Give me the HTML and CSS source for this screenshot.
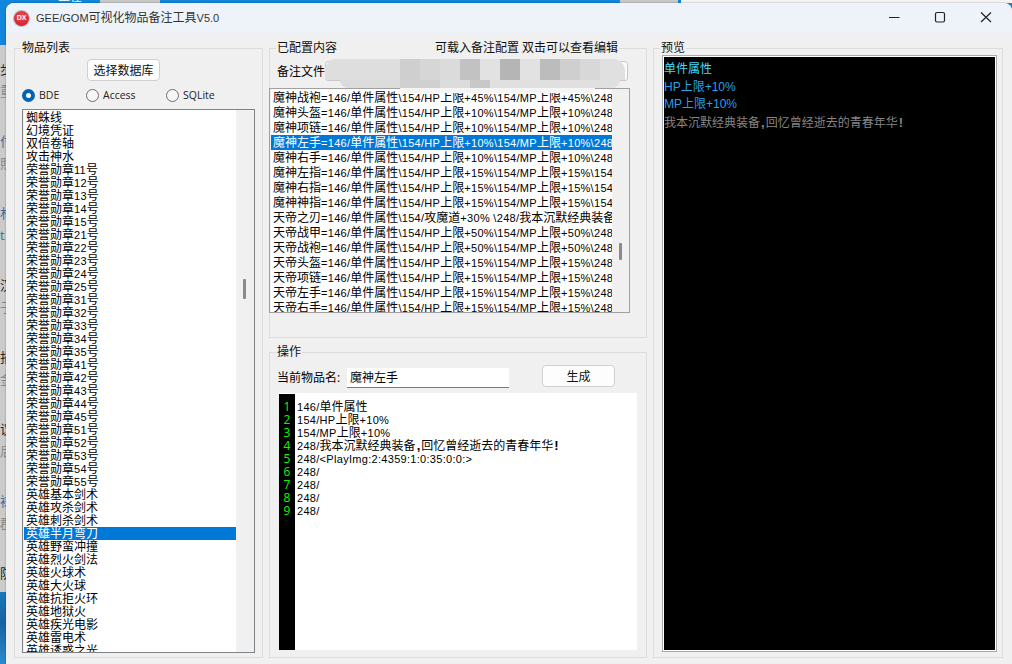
FILE: index.html
```html
<!DOCTYPE html>
<html lang="zh">
<head>
<meta charset="utf-8">
<title>GEE/GOM可视化物品备注工具V5.0</title>
<link rel="stylesheet" href="styles.css">
</head>
<body>
<div class="topband"><span class="topband-text">正在</span></div>
<div class="desk">
  <aside class="strip">
    <div class="app"><span class="d">步</span><span class="g">重</span></div>
    <div class="app"><span class="d b">付</span><span class="g">照</span></div>
    <div class="app"><span class="d b">林</span><span class="g b">t</span></div>
    <div class="app"><span class="d">汉</span><span class="g">子</span></div>
    <div class="app"><span class="d">捐</span><span class="g">金</span></div>
    <div class="app"><span class="d">议</span><span class="g">后</span></div>
    <div class="app"><span class="d b">袜</span><span class="g">郡</span></div>
    <div class="app"><span class="d">防</span></div>
  </aside>
  <main class="window">
    <header class="titlebar">
      <span class="logo"><span class="logo-t">DX</span></span>
      <span class="title"><i>GEE/GOM</i>可视化物品备注工具<i>V5.0</i></span>
      <div class="controls">
        <svg class="ctl" width="46" height="30" viewBox="0 0 46 30"><path d="M18 14.5h10.5" stroke="#222" stroke-width="1.2" fill="none"/></svg>
        <svg class="ctl" width="46" height="30" viewBox="0 0 46 30"><rect x="18.5" y="9.5" width="9" height="9.5" rx="1.5" stroke="#222" stroke-width="1.2" fill="none"/></svg>
        <svg class="ctl" width="46" height="30" viewBox="0 0 46 30"><path d="M18 9.5l10 9.5M28 9.5l-10 9.5" stroke="#222" stroke-width="1.2" fill="none"/></svg>
      </div>
    </header>
    <div class="panels">
      <fieldset class="group g-items">
        <legend class="lg">物品列表</legend>
        <button class="btn btn-db">选择数据库</button>
        <div class="radios">
          <label class="radio r1"><span class="dot on"></span>BDE</label>
          <label class="radio r2"><span class="dot"></span>Access</label>
          <label class="radio"><span class="dot"></span>SQLite</label>
        </div>
        <div class="listbox items">
          <ul class="rows">
            <li>蜘蛛线</li><li>幻境凭证</li><li>双倍卷轴</li><li>攻击神水</li>
            <li>荣誉勋章<i>11</i>号</li><li>荣誉勋章<i>12</i>号</li><li>荣誉勋章<i>13</i>号</li><li>荣誉勋章<i>14</i>号</li><li>荣誉勋章<i>15</i>号</li>
            <li>荣誉勋章<i>21</i>号</li><li>荣誉勋章<i>22</i>号</li><li>荣誉勋章<i>23</i>号</li><li>荣誉勋章<i>24</i>号</li><li>荣誉勋章<i>25</i>号</li>
            <li>荣誉勋章<i>31</i>号</li><li>荣誉勋章<i>32</i>号</li><li>荣誉勋章<i>33</i>号</li><li>荣誉勋章<i>34</i>号</li><li>荣誉勋章<i>35</i>号</li>
            <li>荣誉勋章<i>41</i>号</li><li>荣誉勋章<i>42</i>号</li><li>荣誉勋章<i>43</i>号</li><li>荣誉勋章<i>44</i>号</li><li>荣誉勋章<i>45</i>号</li>
            <li>荣誉勋章<i>51</i>号</li><li>荣誉勋章<i>52</i>号</li><li>荣誉勋章<i>53</i>号</li><li>荣誉勋章<i>54</i>号</li><li>荣誉勋章<i>55</i>号</li>
            <li>英雄基本剑术</li><li>英雄攻杀剑术</li><li>英雄刺杀剑术</li><li class="sel">英雄半月弯刀</li>
            <li>英雄野蛮冲撞</li><li>英雄烈火剑法</li><li>英雄火球术</li><li>英雄大火球</li><li>英雄抗拒火环</li>
            <li>英雄地狱火</li><li>英雄疾光电影</li><li>英雄雷电术</li><li>英雄诱惑之光</li>
          </ul>
          <div class="track"><span class="thumb thumb-a"></span></div>
        </div>
      </fieldset>

      <div class="middle">
        <fieldset class="group g-config">
          <legend class="lg lg-wide"><span>已配置内容</span><span>可载入备注配置 双击可以查看编辑</span></legend>
          <div class="filerow"><span class="filelabel">备注文件</span><span class="filebox"></span></div>
          <div class="blob">
            <div class="blob-a"></div>
            <div class="blob-b"></div>
            <div class="blob-c"></div>
          </div>
          <div class="listbox config">
            <ul class="rows rows-c">
              <li>魔神战袍<i>=146/</i>单件属性<i>\154/HP</i>上限<i>+45%\154/MP</i>上限<i>+45%\248/</i>我本沉默</li>
              <li>魔神头盔<i>=146/</i>单件属性<i>\154/HP</i>上限<i>+10%\154/MP</i>上限<i>+10%\248/</i>我本沉默</li>
              <li>魔神项链<i>=146/</i>单件属性<i>\154/HP</i>上限<i>+10%\154/MP</i>上限<i>+10%\248/</i>我本沉默</li>
              <li class="sel">魔神左手<i>=146/</i>单件属性<i>\154/HP</i>上限<i>+10%\154/MP</i>上限<i>+10%\248/</i>我本沉默</li>
              <li>魔神右手<i>=146/</i>单件属性<i>\154/HP</i>上限<i>+10%\154/MP</i>上限<i>+10%\248/</i>我本沉默</li>
              <li>魔神左指<i>=146/</i>单件属性<i>\154/HP</i>上限<i>+15%\154/MP</i>上限<i>+15%\154/</i>我本沉默</li>
              <li>魔神右指<i>=146/</i>单件属性<i>\154/HP</i>上限<i>+15%\154/MP</i>上限<i>+15%\154/</i>我本沉默</li>
              <li>魔神神指<i>=146/</i>单件属性<i>\154/HP</i>上限<i>+15%\154/MP</i>上限<i>+15%\154/</i>我本沉默</li>
              <li>天帝之刃<i>=146/</i>单件属性<i>\154/</i>攻魔道<i>+30% \248/</i>我本沉默经典装备</li>
              <li>天帝战甲<i>=146/</i>单件属性<i>\154/HP</i>上限<i>+50%\154/MP</i>上限<i>+50%\248/</i>我本沉默</li>
              <li>天帝战袍<i>=146/</i>单件属性<i>\154/HP</i>上限<i>+50%\154/MP</i>上限<i>+50%\248/</i>我本沉默</li>
              <li>天帝头盔<i>=146/</i>单件属性<i>\154/HP</i>上限<i>+15%\154/MP</i>上限<i>+15%\248/</i>我本沉默</li>
              <li>天帝项链<i>=146/</i>单件属性<i>\154/HP</i>上限<i>+15%\154/MP</i>上限<i>+15%\248/</i>我本沉默</li>
              <li>天帝左手<i>=146/</i>单件属性<i>\154/HP</i>上限<i>+15%\154/MP</i>上限<i>+15%\248/</i>我本沉默</li>
              <li>天帝右手<i>=146/</i>单件属性<i>\154/HP</i>上限<i>+15%\154/MP</i>上限<i>+15%\248/</i>我本沉默</li>
            </ul>
            <div class="track"><span class="thumb thumb-b"></span></div>
          </div>
        </fieldset>

        <fieldset class="group g-op">
          <legend class="lg">操作</legend>
          <div class="oprow">
            <span class="oplabel">当前物品名:</span>
            <span class="nameinput">魔神左手</span>
            <button class="btn btn-gen">生成</button>
          </div>
          <div class="editor">
            <ol class="gutter"><li>1</li><li>2</li><li>3</li><li>4</li><li>5</li><li>6</li><li>7</li><li>8</li><li>9</li></ol>
            <div class="code">
              <div class="ln"><i>146/</i>单件属性</div>
              <div class="ln"><i>154/HP</i>上限<i>+10%</i></div>
              <div class="ln"><i>154/MP</i>上限<i>+10%</i></div>
              <div class="ln"><i>248/</i>我本沉默经典装备<b>,</b>回忆曾经逝去的青春年华<b>!</b></div>
              <div class="ln"><i>248/&lt;PlayImg:2:4359:1:0:35:0:0:&gt;</i></div>
              <div class="ln"><i>248/</i></div>
              <div class="ln"><i>248/</i></div>
              <div class="ln"><i>248/</i></div>
              <div class="ln"><i>248/</i></div>
            </div>
          </div>
        </fieldset>
      </div>

      <fieldset class="group g-preview">
        <legend class="lg">预览</legend>
        <div class="screen">
          <p class="pv cyan">单件属性</p>
          <p class="pv blue">HP上限+10%</p>
          <p class="pv blue">MP上限+10%</p>
          <p class="pv gray">我本沉默经典装备<b>,</b>回忆曾经逝去的青春年华<b>!</b></p>
        </div>
      </fieldset>
    </div>
  </main>
</div>
</body>
</html>
```

FILE: styles.css
```css
* { box-sizing: border-box; }
html, body { margin: 0; height: 664px; overflow: hidden; }
body {
  width: 1012px;
  background: #1a86d8;
  font: 12px/15px "Open Sans", "Noto Sans CJK SC", sans-serif;
  color: #000;
}
i {
  font-family: "Liberation Sans", sans-serif;
  font-style: normal;
  font-size: 11px;
  letter-spacing: .3px;
}
b {
  font-family: "Liberation Sans", sans-serif;
  font-weight: 700;
  font-size: 13px;
  padding: 0 1px;
}
.topband {
  height: 3px;
  overflow: hidden;
  background: linear-gradient(90deg, #1186dc 0 100px, #c8c8c8 100px 160px, #1186dc 160px 620px, #c8c8c8 620px 678px, #1186dc 678px 681px, #f4f4f4 681px);
}
.topband-text { display: block; margin: -10px 0 0 58px; color: #fff; font-size: 12px; line-height: 13px; }
.desk { display: flex; height: 661px; }
.strip {
  width: 6px;
  flex: none;
  overflow: hidden;
  padding-top: 59px;
  background: linear-gradient(180deg, #1186dc 0 42px, #cbcbcb 42px 589px, #1a78bd 589px, #15639f 620px, #2a8ad0 661px);
}
.app { height: 72px; display: flex; flex-direction: column; }
.app span { display: block; width: 6px; height: 15px; overflow: hidden; font-size: 13px; line-height: 15px; white-space: nowrap; }
.app .d { color: #222; margin-bottom: 7px; }
.app .g { color: #8a8a8a; }
.app .b { color: #3c6ea0; }
.window {
  flex: 1;
  background: #f0f0f0;
  border-radius: 8px 8px 0 0;
  overflow: hidden;
  box-shadow: 0 0 2px rgba(0,0,0,.4);
}
.titlebar {
  height: 30px;
  display: flex;
  align-items: center;
  background: #eef3fa;
  padding-left: 8px;
}
.logo {
  width: 15px; height: 15px;
  border-radius: 50%;
  background: radial-gradient(circle at 50% 35%, #f04a50, #c8181f);
  display: flex; align-items: center; justify-content: center;
  box-shadow: 0 0 0 1px #b9b9c0;
}
.logo-t { color: #fff; font: bold 7px/8px "Liberation Sans", sans-serif; }
.title { margin-left: 7px; font-size: 12px; color: #333; line-height: 16px; }
.title i { letter-spacing: 0; }
.controls { margin-left: auto; margin-right: 3px; display: flex; }
.ctl { display: block; }
.panels {
  display: flex;
  gap: 6px;
  padding: 7px 0 0 8px;
  align-items: flex-start;
}
.group {
  margin: 0;
  padding: 0;
  min-width: 0;
  border: 1px solid #dcdcdc;
  position: relative;
}
.lg { padding: 0 1px; margin-left: 6px; height: 16px; line-height: 16px; color: #111; }
.lg-wide { width: 343px; display: flex; justify-content: space-between; }
.g-items { width: 249px; height: 618px; }
.middle { width: 378px; display: flex; flex-direction: column; gap: 6px; }
.g-config { height: 298px; }
.g-op { height: 314px; }
.g-preview { width: 350px; height: 618px; }
.btn {
  font: inherit;
  background: #fdfdfd;
  border: 1px solid #d0d0d0;
  border-radius: 4px;
  color: #111;
  padding: 0;
}
.btn-db { display: block; width: 73px; height: 22px; margin: 3px 0 0 72px; }
.radios { display: flex; margin: 7px 0 0 7px; height: 15px; align-items: center; }
.radio { display: flex; align-items: center; gap: 4px; color: #222; font-size: 10.5px; }
.r1 { width: 64px; }
.r2 { width: 80px; }
.dot {
  width: 13px; height: 13px;
  border-radius: 50%;
  border: 1px solid #6f6f6f;
  background: #f6f6f6;
}
.dot.on { border: 4px solid #0063b8; background: #fff; }
.listbox { display: flex; overflow: hidden; background: #f0f0f0; position: relative; }
.items { width: 233px; height: 544px; margin: 6px 0 0 7px; border: 1px solid #7f8488; padding-left: 1px; }
.config { width: 361px; height: 225px; margin: 7px 0 0 -1px; border: 1px solid #a0a0a0; padding-left: 1px; }
.rows {
  list-style: none;
  margin: 0;
  padding: 0;
  background: #fff;
  overflow: hidden;
  height: 100%;
  white-space: nowrap;
}
.items .rows { width: 212px; padding-top: 1px; }
.items .rows li { height: 13px; line-height: 13px; padding-left: 2px; }
.rows-c { width: 341px; padding-top: 1px; flex: none; }
.rows-c li { height: 15px; line-height: 15px; padding-left: 2px; overflow: hidden; }
.sel { background: #0078d7; color: #fff; }
.track { flex: 1; position: relative; background: #f0f0f0; }
.thumb { position: absolute; width: 3px; background: #8a8a8a; border-radius: 1px; }
.thumb-a { left: 7px; top: 169px; height: 20px; }
.thumb-b { left: 7px; top: 154px; height: 17px; }
.filerow { display: flex; align-items: center; height: 20px; margin: 5px 0 0 7px; }
.filelabel { width: 48px; }
.filebox { width: 303px; height: 20px; border: 1px solid #c8c8c8; border-radius: 3px; background: #fbfbfb; }
.blob { position: absolute; left: 55px; top: 3px; width: 300px; height: 35px; z-index: 2; }
.blob-a {
  height: 21px;
  border-radius: 11px 12px 0 0;
  background: linear-gradient(90deg, #dedede 0 75px, #cfcfcf 75px 95px, #d6d6d6 95px 115px, #dbdbdb 115px 135px, #c2c2c2 135px 155px, #e2e2e2 155px 175px, #b5b5b5 175px 195px, #e2e2e2 195px 215px, #bcbcbc 215px 235px, #cfcfcf 235px 255px, #d8d8d8 255px 275px, #e0e0e0 275px 300px);
}
.blob-b {
  height: 8px;
  margin: 0 5px 0 15px;
  border-radius: 0 0 10px 10px;
  background: linear-gradient(90deg, #dcdcdc 0 60px, #d0d0d0 60px 100px, #dcdcdc 100px 130px, #c8c8c8 130px 150px, #e0e0e0 150px 280px);
}
.blob-c { height: 5px; margin: 0 30px 0 75px; background: #f5f5f5; border-radius: 0 0 8px 8px; }
.oprow { display: flex; margin: 5px 0 0 7px; height: 23px; align-items: flex-start; }
.oplabel { width: 70px; line-height: 25px; }
.nameinput {
  width: 162px; height: 20px;
  margin-top: 3px;
  background: #fff;
  border-bottom: 1px solid #7a7a7a;
  padding-left: 3px;
  line-height: 19px;
}
.btn-gen { width: 73px; height: 22px; margin-left: 33px; }
.editor { display: flex; width: 358px; height: 257px; margin: 5px 0 0 9px; background: #fff; padding-top: 1px; }
.gutter {
  list-style: none;
  margin: 0;
  padding: 6px 0 0;
  width: 16px;
  height: 100%;
  background: #000;
  color: #00ff00;
  text-align: center;
  line-height: 13px;
}
.code { padding: 6px 0 0 2px; line-height: 13px; white-space: nowrap; }
.ln { height: 13px; }
.screen {
  width: 335px;
  height: 597px;
  margin: -1px 0 0 8px;
  background: #000;
  border: 1px solid #a9a9a9;
  box-shadow: inset 0 0 0 1px #fff;
  padding: 5px 0 0 1px;
}
.pv { margin: 0; height: 17.6px; line-height: 17.6px; white-space: nowrap; font-family: "Liberation Sans", "Noto Sans CJK SC", sans-serif; }
.cyan { color: #3fdcff; }
.blue { color: #2a9fe6; }
.gray { color: #858585; }
```
